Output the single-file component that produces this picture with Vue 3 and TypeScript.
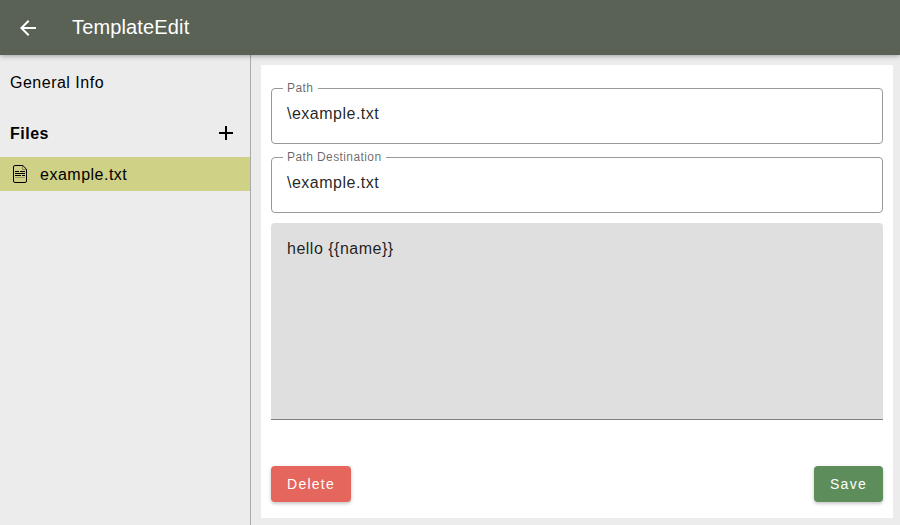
<script setup lang="ts">
import { ref } from 'vue'

interface Field {
  label: string
  value: string
}

const title = 'TemplateEdit'
const files = ref<string[]>(['example.txt'])
const selected = ref('example.txt')
const fields = ref<Field[]>([
  { label: 'Path', value: '\\example.txt' },
  { label: 'Path Destination', value: '\\example.txt' },
])
const content = ref('hello {{name}}')
</script>

<template>
  <div class="app">
    <header class="bar">
      <svg class="back" viewBox="0 0 24 24"><path d="M20 11H7.83l5.59-5.59L12 4l-8 8 8 8 1.41-1.41L7.83 13H20v-2z" /></svg>
      <h1 class="title">{{ title }}</h1>
    </header>
    <div class="body">
      <nav class="side">
        <div class="item">General Info</div>
        <div class="group">
          <span>Files</span>
          <svg class="add" viewBox="0 0 24 24"><path d="M19 13h-6v6h-2v-6H5v-2h6V5h2v6h6v2z" /></svg>
        </div>
        <div v-for="file in files" :key="file" class="file" :class="{ active: file === selected }">
          <svg class="doc" viewBox="0 0 20 20">
            <path d="M12.8 1.5H5a1.5 1.5 0 0 0-1.5 1.5v14A1.5 1.5 0 0 0 5 18.5h10a1.5 1.5 0 0 0 1.5-1.5V5.2z" />
            <path class="fold" d="M12.5 2v3.5h3.5" />
            <path d="M5 7.5h4M10 7.5h5M5 9.5h10M5 11.5h6M12 11.5h3" />
            <path class="faint" d="M5 13.5h10" />
          </svg>
          <span class="name">{{ file }}</span>
        </div>
      </nav>
      <main class="main">
        <section class="panel">
          <fieldset v-for="field in fields" :key="field.label" class="field">
            <legend>{{ field.label }}</legend>
            <div class="value">{{ field.value }}</div>
          </fieldset>
          <div class="editor">{{ content }}</div>
          <div class="actions">
            <button class="btn delete">Delete</button>
            <button class="btn save">Save</button>
          </div>
        </section>
      </main>
    </div>
  </div>
</template>

<style>
body {
  margin: 0;
}
</style>

<style scoped>
.app {
  height: 525px;
  display: flex;
  flex-direction: column;
  background: #ececec;
  color: #000;
  font-family: "Liberation Sans", Arial, sans-serif;
  font-size: 16px;
  letter-spacing: 0.5px;
  overflow: hidden;
}
.app * {
  box-sizing: border-box;
}
.bar {
  flex: none;
  height: 55px;
  display: flex;
  align-items: center;
  padding: 0 16px;
  background: #5a6155;
  color: #fff;
  box-shadow: 0 1px 5px rgba(0, 0, 0, 0.32);
  z-index: 1;
}
.back {
  width: 24px;
  height: 24px;
  fill: #fff;
}
.title {
  margin: 0 0 2px 32px;
  font-size: 20px;
  font-weight: 400;
  line-height: 24px;
  letter-spacing: 0.15px;
}
.body {
  flex: 1;
  display: flex;
  min-height: 0;
}
.side {
  flex: none;
  width: 251px;
  border-right: 1px solid #aaa;
  padding-top: 10px;
}
.item {
  height: 34px;
  line-height: 36px;
  padding-left: 10px;
}
.group {
  display: flex;
  align-items: center;
  justify-content: space-between;
  height: 48px;
  margin-top: 10px;
  padding: 0 12px 0 10px;
  font-weight: 700;
}
.group span,
.name {
  padding-top: 2px;
}
.add {
  width: 24px;
  height: 24px;
}
.file {
  display: flex;
  align-items: center;
  gap: 10px;
  height: 34px;
  padding-left: 10px;
}
.file.active {
  background: #cfd186;
}
.doc {
  width: 20px;
  height: 20px;
  fill: none;
  stroke: #000;
}
.fold {
  opacity: 0.35;
}
.faint {
  opacity: 0.25;
}
.main {
  flex: 1;
  display: flex;
  padding: 10px 7px 7px 10px;
}
.panel {
  flex: 1;
  display: flex;
  flex-direction: column;
  padding: 16px 10px;
  background: #fff;
}
.field {
  height: 63px;
  min-width: 0;
  margin: 0 0 6px;
  padding: 0 11px;
  border: 1px solid #999;
  border-radius: 4px;
  color: rgba(0, 0, 0, 0.87);
}
.field legend {
  height: 14px;
  padding: 0 5px 0 4px;
  font-size: 12px;
  line-height: 14px;
  letter-spacing: 0.4px;
  color: rgba(0, 0, 0, 0.6);
}
.value {
  padding: 9px 4px 0;
  line-height: 20px;
}
.editor {
  height: 197px;
  margin-top: 4px;
  padding: 16px;
  background: #dfdfdf;
  border-bottom: 1px solid #808080;
  border-radius: 4px 4px 0 0;
  line-height: 20px;
  color: rgba(0, 0, 0, 0.87);
}
.actions {
  display: flex;
  justify-content: space-between;
  margin-top: auto;
}
.btn {
  height: 36px;
  padding: 0 16px;
  border: 0;
  border-radius: 4px;
  color: #fff;
  font-family: "Liberation Sans", Arial, sans-serif;
  font-size: 14px;
  font-weight: 500;
  letter-spacing: 1.25px;
  box-shadow: 0 2px 3px rgba(0, 0, 0, 0.14), 0 1px 5px rgba(0, 0, 0, 0.1);
}
.delete {
  width: 80px;
  background: #e5665d;
}
.save {
  width: 69px;
  background: #5c8d5a;
}
</style>
